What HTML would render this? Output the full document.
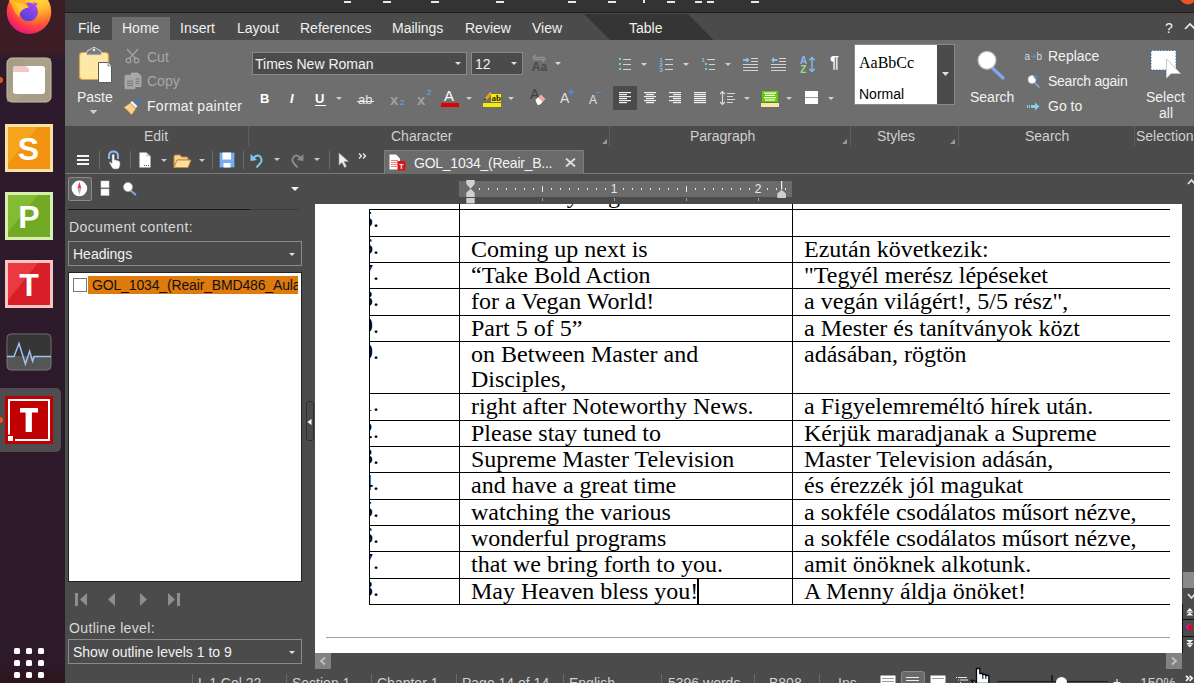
<!DOCTYPE html>
<html><head><meta charset="utf-8"><style>
html,body{margin:0;padding:0;width:1194px;height:683px;overflow:hidden;background:#4b4b4b}
.a{position:absolute}
.u{font-family:"Liberation Sans",sans-serif;font-size:14px;line-height:16px;white-space:nowrap}
.d{font-family:"Liberation Serif",serif;font-size:24px;line-height:25px;margin-top:1px;white-space:nowrap;color:#000}
</style></head><body>
<div class="a" style="left:0;top:0;width:65px;height:683px;background:linear-gradient(#3d1d25 0px,#3c1d25 52px,#2d1a2c 60px,#2c1a2b 665px,#2d1820 674px,#2b161b 683px)"></div>
<div class="a" style="left:65px;top:0px;width:1129px;height:683px;background:#4b4b4b"></div>
<div class="a" style="left:65px;top:0px;width:1129px;height:12px;background:#333333"></div>
<div class="a" style="left:65px;top:12px;width:1129px;height:1px;background:#2a1717"></div>
<div class="a" style="left:344px;top:1px;width:7px;height:2px;background:#e8e8e8"></div>
<div class="a" style="left:383px;top:1px;width:8px;height:2px;background:#e8e8e8"></div>
<div class="a" style="left:431px;top:1px;width:8px;height:2px;background:#e8e8e8"></div>
<div class="a" style="left:496px;top:1px;width:8px;height:2px;background:#e8e8e8"></div>
<div class="a" style="left:568px;top:1px;width:8px;height:2px;background:#e8e8e8"></div>
<div class="a" style="left:608px;top:1px;width:8px;height:2px;background:#e8e8e8"></div>
<div class="a" style="left:667px;top:1px;width:8px;height:2px;background:#e8e8e8"></div>
<div class="a" style="left:695px;top:1px;width:7px;height:2px;background:#e8e8e8"></div>
<div class="a" style="left:707px;top:1px;width:7px;height:2px;background:#e8e8e8"></div>
<div class="a" style="left:751px;top:1px;width:8px;height:2px;background:#e8e8e8"></div>
<div class="a" style="left:643px;top:0px;width:2px;height:3px;background:#e8e8e8"></div>
<svg class="a" style="left:1178px;top:0px;" width="16" height="5" viewBox="0 0 16 5"><circle cx="10" cy="-4" r="8.5" fill="#e95420"/></svg>
<div class="a" style="left:65px;top:13px;width:1129px;height:27px;background:#4b4b4b"></div>
<div class="a" style="left:112px;top:17px;width:58px;height:23px;background:#6e6e6e"></div>
<svg class="a" style="left:584px;top:13px" width="132" height="27"><polygon points="0,1 104,1 129.5,27 26,27" fill="#353535"/></svg>
<div class="a u" style="left:78px;top:20px;color:#f0f0f0">File</div>
<div class="a u" style="left:122px;top:20px;color:#f0f0f0">Home</div>
<div class="a u" style="left:180px;top:20px;color:#f0f0f0">Insert</div>
<div class="a u" style="left:237px;top:20px;color:#f0f0f0">Layout</div>
<div class="a u" style="left:300px;top:20px;color:#f0f0f0">References</div>
<div class="a u" style="left:392px;top:20px;color:#f0f0f0">Mailings</div>
<div class="a u" style="left:465px;top:20px;color:#f0f0f0">Review</div>
<div class="a u" style="left:532px;top:20px;color:#f0f0f0">View</div>
<div class="a u" style="left:629px;top:20px;color:#f0f0f0">Table</div>
<div class="a u" style="left:1165px;top:20px;color:#f0f0f0">?</div>
<svg class="a" style="left:1184px;top:22px;" width="10" height="8" viewBox="0 0 10 8"><polyline points="1,7 6,2 11,7" fill="none" stroke="#eee" stroke-width="1.6"/></svg>
<div class="a" style="left:65px;top:40px;width:1129px;height:86px;background:#6e6e6e"></div>
<div class="a" style="left:65px;top:126px;width:1129px;height:21px;background:#4b4b4b"></div>
<div class="a" style="left:248px;top:126px;width:1px;height:20px;background:#5e5e5e"></div>
<div class="a" style="left:609px;top:126px;width:1px;height:20px;background:#5e5e5e"></div>
<div class="a" style="left:850px;top:126px;width:1px;height:20px;background:#5e5e5e"></div>
<div class="a" style="left:958px;top:126px;width:1px;height:20px;background:#5e5e5e"></div>
<div class="a" style="left:1134px;top:126px;width:1px;height:20px;background:#5e5e5e"></div>
<div class="a u" style="left:144px;top:128px;color:#cfcfcf">Edit</div>
<div class="a u" style="left:391px;top:128px;color:#cfcfcf">Character</div>
<div class="a u" style="left:690px;top:128px;color:#cfcfcf">Paragraph</div>
<div class="a u" style="left:877px;top:128px;color:#cfcfcf">Styles</div>
<div class="a u" style="left:1025px;top:128px;color:#cfcfcf">Search</div>
<div class="a u" style="left:1136px;top:128px;color:#cfcfcf">Selection</div>
<svg class="a" style="left:602px;top:139px;" width="6" height="6" viewBox="0 0 6 6"><polygon points="5,0 5,5 0,5" fill="#9a9a9a"/></svg>
<svg class="a" style="left:842px;top:139px;" width="6" height="6" viewBox="0 0 6 6"><polygon points="5,0 5,5 0,5" fill="#9a9a9a"/></svg>
<svg class="a" style="left:950px;top:139px;" width="6" height="6" viewBox="0 0 6 6"><polygon points="5,0 5,5 0,5" fill="#9a9a9a"/></svg>
<div class="a u" style="left:77px;top:89px;color:#f2f2f2">Paste</div>
<svg class="a" style="left:90px;top:110px;" width="7" height="4" viewBox="0 0 7 4"><polygon points="0,0 7,0 3.5,4" fill="#cfcfcf"/></svg>
<div class="a u" style="left:147px;top:49px;color:#a8a8a8">Cut</div>
<div class="a u" style="left:147px;top:73px;color:#a8a8a8">Copy</div>
<div class="a u" style="left:147px;top:98px;color:#f2f2f2;letter-spacing:0.3px">Format painter</div>
<div class="a" style="left:252px;top:52px;width:215px;height:23px;background:#4b4b4b;box-sizing:border-box;border:1px solid #8a8a8a"></div>
<div class="a u" style="left:255px;top:56px;color:#f2f2f2">Times New Roman</div>
<svg class="a" style="left:455px;top:62px;" width="6" height="3" viewBox="0 0 6 3"><polygon points="0,0 6,0 3,3" fill="#e0e0e0"/></svg>
<div class="a" style="left:471px;top:52px;width:52px;height:23px;background:#4b4b4b;box-sizing:border-box;border:1px solid #8a8a8a"></div>
<div class="a u" style="left:475px;top:56px;color:#f2f2f2">12</div>
<svg class="a" style="left:511px;top:62px;" width="6" height="3" viewBox="0 0 6 3"><polygon points="0,0 6,0 3,3" fill="#e0e0e0"/></svg>
<div class="a" style="left:854px;top:44px;width:101px;height:61px;background:#4b4b4b;box-sizing:border-box;border:1px solid #8a8a8a"></div>
<div class="a" style="left:855px;top:45px;width:82px;height:59px;background:#ffffff"></div>
<div class="a " style="left:859px;top:54px;color:#000;font-family:'Liberation Serif',serif;font-size:16px">AaBbCc</div>
<div class="a u" style="left:859px;top:86px;color:#000">Normal</div>
<svg class="a" style="left:942px;top:72px;" width="7" height="4" viewBox="0 0 7 4"><polygon points="0,0 7,0 3.5,4" fill="#e0e0e0"/></svg>
<div class="a u" style="left:970px;top:89px;color:#f2f2f2">Search</div>
<div class="a u" style="left:1048px;top:48px;color:#f2f2f2">Replace</div>
<div class="a u" style="left:1048px;top:73px;color:#f2f2f2;letter-spacing:-0.25px">Search again</div>
<div class="a u" style="left:1048px;top:98px;color:#f2f2f2">Go to</div>
<div class="a u" style="left:1146px;top:89px;color:#f2f2f2">Select</div>
<div class="a u" style="left:1159px;top:105px;color:#f2f2f2">all</div>
<div class="a" style="left:65px;top:147px;width:1129px;height:26px;background:#4b4b4b"></div>
<div class="a" style="left:65px;top:173px;width:1129px;height:1px;background:#7a7a7a"></div>
<div class="a" style="left:384px;top:150px;width:200px;height:24px;background:#6b6b6b;box-sizing:border-box;border:1px solid #7d7d7d;border-bottom:none"></div>
<div class="a u" style="left:414px;top:155px;color:#f2f2f2;letter-spacing:-0.25px">GOL_1034_(Reair_B...</div>
<div class="a" style="left:65px;top:174px;width:240px;height:509px;background:#4b4b4b"></div>
<div class="a" style="left:68px;top:177px;width:24px;height:24px;background:#5e5e5e;box-sizing:border-box;border:1px solid #8a8a8a;border-radius:2px"></div>
<div class="a" style="left:68px;top:209px;width:182px;height:1px;background:#1a1a1a"></div>
<div class="a" style="left:250px;top:209px;width:49px;height:1px;background:#3a3d30"></div>
<div class="a u" style="left:69px;top:219px;color:#d8d8d8;letter-spacing:0.38px">Document content:</div>
<div class="a" style="left:68px;top:241px;width:234px;height:25px;background:#4b4b4b;box-sizing:border-box;border:1px solid #8a8a8a"></div>
<div class="a u" style="left:73px;top:246px;color:#f2f2f2">Headings</div>
<svg class="a" style="left:289px;top:253px;" width="6" height="3" viewBox="0 0 6 3"><polygon points="0,0 6,0 3,3" fill="#e0e0e0"/></svg>
<div class="a" style="left:68px;top:272px;width:234px;height:310px;background:#fff;box-sizing:border-box;border:1px solid #222"></div>
<div class="a" style="left:73px;top:278px;width:14px;height:14px;background:#fff;box-sizing:border-box;border:1px solid #777"></div>
<div class="a" style="left:88px;top:276px;width:210px;height:18px;background:#df7a0d"></div>
<div class="a u" style="left:92px;top:277px;width:206px;overflow:hidden;white-space:nowrap;color:#111;letter-spacing:-0.15px">GOL_1034_(Reair_BMD486_Aula</div>
<div class="a u" style="left:69px;top:620px;color:#d8d8d8;letter-spacing:0.36px">Outline level:</div>
<div class="a" style="left:68px;top:639px;width:234px;height:25px;background:#4b4b4b;box-sizing:border-box;border:1px solid #8a8a8a"></div>
<div class="a u" style="left:73px;top:644px;color:#f2f2f2">Show outline levels 1 to 9</div>
<svg class="a" style="left:289px;top:651px;" width="6" height="3" viewBox="0 0 6 3"><polygon points="0,0 6,0 3,3" fill="#e0e0e0"/></svg>
<div class="a" style="left:305px;top:174px;width:877px;height:479px;background:#4b4b4b"></div>
<div class="a" style="left:459px;top:181px;width:333px;height:16px;background:#6b6b6b"></div>
<div class="a" style="left:315px;top:204px;width:867px;height:449px;background:#ffffff"></div>
<div class="a" style="left:1182px;top:174px;width:12px;height:479px;background:#4b4b4b"></div>
<div class="a" style="left:305px;top:653px;width:889px;height:16px;background:#4b4b4b"></div>
<div class="a" style="left:315px;top:653px;width:16px;height:16px;background:#828282"></div>
<div class="a" style="left:1166px;top:653px;width:16px;height:16px;background:#828282"></div>
<div class="a" style="left:369px;top:209px;width:801px;height:1px;background:#000"></div>
<div class="a" style="left:369px;top:236px;width:801px;height:1px;background:#000"></div>
<div class="a" style="left:369px;top:262px;width:801px;height:1px;background:#000"></div>
<div class="a" style="left:369px;top:288px;width:801px;height:1px;background:#000"></div>
<div class="a" style="left:369px;top:315px;width:801px;height:1px;background:#000"></div>
<div class="a" style="left:369px;top:341px;width:801px;height:1px;background:#000"></div>
<div class="a" style="left:369px;top:393px;width:801px;height:1px;background:#000"></div>
<div class="a" style="left:369px;top:420px;width:801px;height:1px;background:#000"></div>
<div class="a" style="left:369px;top:446px;width:801px;height:1px;background:#000"></div>
<div class="a" style="left:369px;top:472px;width:801px;height:1px;background:#000"></div>
<div class="a" style="left:369px;top:499px;width:801px;height:1px;background:#000"></div>
<div class="a" style="left:369px;top:525px;width:801px;height:1px;background:#000"></div>
<div class="a" style="left:369px;top:551px;width:801px;height:1px;background:#000"></div>
<div class="a" style="left:369px;top:578px;width:801px;height:1px;background:#000"></div>
<div class="a" style="left:369px;top:604px;width:801px;height:1px;background:#000"></div>
<div class="a" style="left:369px;top:209px;width:1px;height:396px;background:#000"></div>
<div class="a" style="left:459px;top:204px;width:1px;height:401px;background:#000"></div>
<div class="a" style="left:792px;top:204px;width:1px;height:401px;background:#000"></div>
<div class="a d" style="left:471px;top:209px;"></div>
<div class="a d" style="left:804px;top:209px;"></div>
<div class="a d" style="left:370px;top:209px;width:89px;height:26px;overflow:hidden"><span style="position:absolute;left:-21px;top:-3px">15.</span></div>
<div class="a d" style="left:471px;top:236px;">Coming up next is</div>
<div class="a d" style="left:804px;top:236px;">Ezután következik:</div>
<div class="a d" style="left:370px;top:236px;width:89px;height:26px;overflow:hidden"><span style="position:absolute;left:-21px;top:-3px">16.</span></div>
<div class="a d" style="left:471px;top:262px;">“Take Bold Action</div>
<div class="a d" style="left:804px;top:262px;">"Tegyél merész lépéseket</div>
<div class="a d" style="left:370px;top:262px;width:89px;height:26px;overflow:hidden"><span style="position:absolute;left:-21px;top:-3px">17.</span></div>
<div class="a d" style="left:471px;top:288px;">for a Vegan World!</div>
<div class="a d" style="left:804px;top:288px;">a vegán világért!, 5/5 rész",</div>
<div class="a d" style="left:370px;top:288px;width:89px;height:26px;overflow:hidden"><span style="position:absolute;left:-21px;top:-3px">18.</span></div>
<div class="a d" style="left:471px;top:315px;">Part 5 of 5”</div>
<div class="a d" style="left:804px;top:315px;">a Mester és tanítványok közt</div>
<div class="a d" style="left:370px;top:315px;width:89px;height:26px;overflow:hidden"><span style="position:absolute;left:-21px;top:-3px">19.</span></div>
<div class="a d" style="left:471px;top:341px;">on Between Master and<br>Disciples,</div>
<div class="a d" style="left:804px;top:341px;">adásában, rögtön</div>
<div class="a d" style="left:370px;top:341px;width:89px;height:26px;overflow:hidden"><span style="position:absolute;left:-21px;top:-3px">20.</span></div>
<div class="a d" style="left:471px;top:393px;">right after Noteworthy News.</div>
<div class="a d" style="left:804px;top:393px;">a Figyelemreméltó hírek után.</div>
<div class="a d" style="left:370px;top:393px;width:89px;height:26px;overflow:hidden"><span style="position:absolute;left:-21px;top:-3px">21.</span></div>
<div class="a d" style="left:471px;top:420px;">Please stay tuned to</div>
<div class="a d" style="left:804px;top:420px;">Kérjük maradjanak a Supreme</div>
<div class="a d" style="left:370px;top:420px;width:89px;height:26px;overflow:hidden"><span style="position:absolute;left:-21px;top:-3px">22.</span></div>
<div class="a d" style="left:471px;top:446px;">Supreme Master Television</div>
<div class="a d" style="left:804px;top:446px;">Master Television adásán,</div>
<div class="a d" style="left:370px;top:446px;width:89px;height:26px;overflow:hidden"><span style="position:absolute;left:-21px;top:-3px">23.</span></div>
<div class="a d" style="left:471px;top:472px;">and have a great time</div>
<div class="a d" style="left:804px;top:472px;">és érezzék jól magukat</div>
<div class="a d" style="left:370px;top:472px;width:89px;height:26px;overflow:hidden"><span style="position:absolute;left:-21px;top:-3px">24.</span></div>
<div class="a d" style="left:471px;top:499px;">watching the various</div>
<div class="a d" style="left:804px;top:499px;">a sokféle csodálatos műsort nézve,</div>
<div class="a d" style="left:370px;top:499px;width:89px;height:26px;overflow:hidden"><span style="position:absolute;left:-21px;top:-3px">25.</span></div>
<div class="a d" style="left:471px;top:525px;">wonderful programs</div>
<div class="a d" style="left:804px;top:525px;">a sokféle csodálatos műsort nézve,</div>
<div class="a d" style="left:370px;top:525px;width:89px;height:26px;overflow:hidden"><span style="position:absolute;left:-21px;top:-3px">26.</span></div>
<div class="a d" style="left:471px;top:551px;">that we bring forth to you.</div>
<div class="a d" style="left:804px;top:551px;">amit önöknek alkotunk.</div>
<div class="a d" style="left:370px;top:551px;width:89px;height:26px;overflow:hidden"><span style="position:absolute;left:-21px;top:-3px">27.</span></div>
<div class="a d" style="left:471px;top:578px;">May Heaven bless you!</div>
<div class="a d" style="left:804px;top:578px;">A Menny áldja önöket!</div>
<div class="a d" style="left:370px;top:578px;width:89px;height:26px;overflow:hidden"><span style="position:absolute;left:-21px;top:-3px">28.</span></div>
<div class="a" style="left:460px;top:204px;width:332px;height:5px;overflow:hidden"><div class="a d" style="left:8px;top:-22px">And wish you</div><div class="a d" style="left:148px;top:-22px">good</div></div>
<div class="a" style="left:697px;top:579px;width:2px;height:25px;background:#000"></div>
<div class="a" style="left:326px;top:637px;width:844px;height:1px;background:#a0a0a0"></div>
<div class="a" style="left:192px;top:674px;width:1px;height:9px;background:#6a6a6a"></div>
<div class="a" style="left:286px;top:674px;width:1px;height:9px;background:#6a6a6a"></div>
<div class="a" style="left:371px;top:674px;width:1px;height:9px;background:#6a6a6a"></div>
<div class="a" style="left:456px;top:674px;width:1px;height:9px;background:#6a6a6a"></div>
<div class="a" style="left:563px;top:674px;width:1px;height:9px;background:#6a6a6a"></div>
<div class="a" style="left:661px;top:674px;width:1px;height:9px;background:#6a6a6a"></div>
<div class="a" style="left:754px;top:674px;width:1px;height:9px;background:#6a6a6a"></div>
<div class="a" style="left:819px;top:674px;width:1px;height:9px;background:#6a6a6a"></div>
<div class="a u" style="left:198px;top:675px;color:#d0d0d0">L 1 Col 22</div>
<div class="a u" style="left:292px;top:675px;color:#d0d0d0">Section 1</div>
<div class="a u" style="left:377px;top:675px;color:#d0d0d0">Chapter 1</div>
<div class="a u" style="left:462px;top:675px;color:#d0d0d0">Page 14 of 14</div>
<div class="a u" style="left:569px;top:675px;color:#d0d0d0">English</div>
<div class="a u" style="left:668px;top:675px;color:#d0d0d0">5396 words</div>
<div class="a u" style="left:769px;top:675px;color:#d0d0d0">B808</div>
<div class="a u" style="left:838px;top:675px;color:#d0d0d0">Ins</div>
<div class="a u" style="left:1140px;top:675px;color:#d0d0d0">150%</div>
<svg class="a" style="left:0px;top:0px;" width="64" height="40" viewBox="0 0 64 40"><defs><radialGradient id="ffg" cx="0.72" cy="0.1" r="0.95"><stop offset="0" stop-color="#ffe54a"/><stop offset="0.35" stop-color="#ffc030"/><stop offset="0.6" stop-color="#ff7a30"/><stop offset="0.82" stop-color="#ff3a48"/><stop offset="1" stop-color="#e8187a"/></radialGradient><linearGradient id="ffp" x1="0.8" y1="0" x2="0.2" y2="1"><stop offset="0" stop-color="#b048f0"/><stop offset="1" stop-color="#4a40d8"/></linearGradient></defs><circle cx="29" cy="11.7" r="22.3" fill="url(#ffg)"/><circle cx="28.7" cy="11.8" r="9.3" fill="url(#ffp)"/><path d="M33,2 L38,4 L35,6 Z" fill="#a048f0"/><path d="M9,0 L24,0 L29,7.5 Q24,7 20,13 L19,17 Q14,12 12,6 Z" fill="#ffb020"/><path d="M14,2 L22,3 L28,7.5 Q23,8 20,12 Z" fill="#ffc838"/></svg>
<svg class="a" style="left:6px;top:57px;" width="46" height="46" viewBox="0 0 46 46"><rect x="1" y="1" width="44" height="44" rx="5" fill="#a59d88" stroke="#c8c0a8" stroke-width="1"/><path d="M20,1 L45,1 L45,10 L10,45 L1,45 L1,40 Z" fill="#b0a890" opacity="0.5"/><rect x="7" y="9" width="32" height="28" rx="3" fill="#ffffff"/><path d="M7,15 L7,11 Q7,9 9,9 L20,9 L23,12 L23,15 Z" fill="#f0c8c4"/></svg>
<div class="a" style="left:0px;top:77px;width:3px;height:6px;background:#e95420;border-radius:0 3px 3px 0"></div>
<svg class="a" style="left:5px;top:124px;" width="48" height="48" viewBox="0 0 48 48"><rect x="0" y="0" width="48" height="48" fill="#f9e2a8"/><rect x="3" y="3" width="42" height="42" fill="#f29410"/><path d="M3,3 L33,3 L3,40 Z" fill="#f8a820" opacity="0.8"/><text x="23.5" y="35.5" font-family="Liberation Sans" font-weight="bold" font-size="32" fill="#fff" text-anchor="middle">S</text></svg>
<svg class="a" style="left:5px;top:192px;" width="48" height="48" viewBox="0 0 48 48"><rect x="0" y="0" width="48" height="48" fill="#d8edb0"/><rect x="3" y="3" width="42" height="42" fill="#72a924"/><path d="M3,3 L33,3 L3,40 Z" fill="#88c034" opacity="0.8"/><text x="24" y="35.5" font-family="Liberation Sans" font-weight="bold" font-size="32" fill="#fff" text-anchor="middle">P</text></svg>
<svg class="a" style="left:5px;top:260px;" width="48" height="48" viewBox="0 0 48 48"><rect x="0" y="0" width="48" height="48" fill="#f8c4c4"/><rect x="3" y="3" width="42" height="42" fill="#d81e26"/><path d="M3,3 L33,3 L3,40 Z" fill="#ee4048" opacity="0.8"/><text x="24" y="35.5" font-family="Liberation Sans" font-weight="bold" font-size="32" fill="#fff" text-anchor="middle">T</text></svg>
<svg class="a" style="left:6px;top:333px;" width="46" height="38" viewBox="0 0 46 38"><rect x="1" y="1" width="44" height="36" rx="4" fill="#555555" stroke="#787878" stroke-width="1"/><path d="M1.5,23 L1.5,5 Q1.5,1.5 5,1.5 L41,1.5 Q44.5,1.5 44.5,5 L44.5,23 Z" fill="#363636"/><polyline points="1,23.4 8,23.4 13,10.5 19.4,31 23.6,18.2 26.6,28.2 28.2,23.4 45,23.4" fill="none" stroke="#9cc0f0" stroke-width="1.5"/></svg>
<div class="a" style="left:0px;top:388px;width:61px;height:64px;background:#4e4c4e;border-radius:0 5px 5px 0"></div>
<svg class="a" style="left:5px;top:396px;" width="48" height="48" viewBox="0 0 48 48"><rect x="0" y="0" width="48" height="48" fill="#c00000"/><path d="M4,38.5 L4,4 L44,4 L44,44 L10,44" fill="none" stroke="#fff" stroke-width="2"/><rect x="3" y="40" width="5" height="5" fill="#fff"/><rect x="15" y="12" width="18" height="4.5" fill="#fff"/><rect x="20.6" y="12" width="6.3" height="24" fill="#fff"/></svg>
<div class="a" style="left:0px;top:417px;width:3px;height:6px;background:#e95420;border-radius:0 3px 3px 0"></div>
<div class="a" style="left:14px;top:648px;width:6px;height:6px;background:#fff;border-radius:1.5px"></div>
<div class="a" style="left:14px;top:660px;width:6px;height:6px;background:#fff;border-radius:1.5px"></div>
<div class="a" style="left:14px;top:672px;width:6px;height:6px;background:#fff;border-radius:1.5px"></div>
<div class="a" style="left:26px;top:648px;width:6px;height:6px;background:#fff;border-radius:1.5px"></div>
<div class="a" style="left:26px;top:660px;width:6px;height:6px;background:#fff;border-radius:1.5px"></div>
<div class="a" style="left:26px;top:672px;width:6px;height:6px;background:#fff;border-radius:1.5px"></div>
<div class="a" style="left:38px;top:648px;width:6px;height:6px;background:#fff;border-radius:1.5px"></div>
<div class="a" style="left:38px;top:660px;width:6px;height:6px;background:#fff;border-radius:1.5px"></div>
<div class="a" style="left:38px;top:672px;width:6px;height:6px;background:#fff;border-radius:1.5px"></div>
<svg class="a" style="left:77px;top:45px;" width="38" height="40" viewBox="0 0 38 40"><rect x="2.5" y="7.5" width="29" height="27" rx="3" fill="#fde8a6" stroke="#dba050" stroke-width="1.2"/><path d="M9.5,10 L9.5,8 Q9.5,5 13,4.5 L14.5,3.5 Q17,1 19.5,3.5 L21,4.5 Q24.5,5 24.5,8 L24.5,10 Z" fill="#7a7a7a" stroke="#d8d8d8" stroke-width="1"/><circle cx="17" cy="5" r="1.2" fill="#eee"/><path d="M21.5,17.5 L31,17.5 L34.5,21 L34.5,37.5 L21.5,37.5 Z" fill="#fff" stroke="#5a5a5a" stroke-width="1"/><path d="M31,17.5 L31,21 L34.5,21" fill="#ddd" stroke="#888" stroke-width="0.8"/></svg>
<svg class="a" style="left:90px;top:110px;" width="7" height="4" viewBox="0 0 7 4"><polygon points="0,0 7,0 3.5,4" fill="#cfcfcf"/></svg>
<svg class="a" style="left:125px;top:48px;" width="16" height="16" viewBox="0 0 16 16"><g fill="none" stroke="#a2a2a2" stroke-width="1.3"><line x1="2" y1="1" x2="11" y2="11"/><line x1="13" y1="1" x2="4" y2="11"/><circle cx="3.5" cy="12.5" r="2.3"/><circle cx="11.5" cy="12.5" r="2.3"/></g></svg>
<svg class="a" style="left:124px;top:72px;" width="18" height="18" viewBox="0 0 18 18"><g fill="#a6a6a6" stroke="#b8b8b8" stroke-width="0.6"><path d="M7.3,1 H14 L17,4 V14.7 H7.3 Z"/><path d="M1,3.3 H8 L11,6.3 V16.8 H1 Z"/></g><g fill="#777"><rect x="3" y="8.7" width="6" height="1"/><rect x="3" y="10.9" width="6" height="1"/><rect x="3" y="13.1" width="6" height="1"/><rect x="11.5" y="6.5" width="4" height="1"/><rect x="11.5" y="8.9" width="4" height="1"/><rect x="11.5" y="11.1" width="4" height="1"/></g></svg>
<svg class="a" style="left:123px;top:97px;" width="18" height="18" viewBox="0 0 18 18"><line x1="17.5" y1="1.4" x2="12.5" y2="6.4" stroke="#3d7cc0" stroke-width="2.6"/><line x1="8.2" y1="4.8" x2="13.6" y2="10.2" stroke="#f4f4f4" stroke-width="2.6"/><path d="M7.3,6.3 L12.6,11.6 L8.7,17.6 L1.2,10.2 Z" fill="#f8d890" stroke="#e0a040" stroke-width="0.8"/><g stroke="#e8b060" stroke-width="0.6"><line x1="9" y1="8" x2="4" y2="13"/><line x1="11" y1="10" x2="6" y2="15"/></g></svg>
<svg class="a" style="left:525px;top:53px;" width="24" height="19" viewBox="0 0 24 19"><g stroke="#8e8e8e" stroke-width="1.3" fill="none"><polyline points="11,1.8 8,4.5 20,4.5"/><polyline points="8,6.5 20,6.5 17,9.2"/></g><text x="6.8" y="17.8" font-family="Liberation Sans" font-size="12" font-weight="bold" fill="#4a4a4a">Aa</text></svg>
<svg class="a" style="left:555px;top:62px;" width="6" height="3" viewBox="0 0 6 3"><polygon points="0,0 6,0 3,3" fill="#d8d8d8"/></svg>
<div class="a u" style="left:260px;top:91px;color:#fff;font-weight:bold;font-size:13px">B</div>
<div class="a u" style="left:290px;top:91px;color:#fff;font-style:italic;font-weight:bold;font-size:13px">I</div>
<div class="a u" style="left:315px;top:91px;color:#fff;font-weight:bold;font-size:13px">U</div>
<div class="a" style="left:315px;top:105px;width:11px;height:1px;background:#fff"></div>
<svg class="a" style="left:336px;top:97px;" width="6" height="3" viewBox="0 0 6 3"><polygon points="0,0 6,0 3,3" fill="#d0d0d0"/></svg>
<div class="a u" style="left:358px;top:92px;color:#e8e8e8;font-size:13px">ab</div>
<div class="a" style="left:357px;top:101px;width:17px;height:1px;background:#e8e8e8"></div>
<div class="a u" style="left:390px;top:92px;color:#a0a0a0;font-size:15px;font-weight:bold">x</div>
<div class="a u" style="left:400px;top:99px;color:#6ab0ee;font-size:8px;line-height:8px">2</div>
<div class="a u" style="left:417px;top:92px;color:#a0a0a0;font-size:15px;font-weight:bold">x</div>
<div class="a u" style="left:427px;top:89px;color:#6ab0ee;font-size:8px;line-height:8px">2</div>
<div class="a u" style="left:444px;top:88px;color:#fff;font-size:15px">A</div>
<div class="a" style="left:441px;top:103px;width:18px;height:4px;background:#e00000"></div>
<svg class="a" style="left:466px;top:97px;" width="6" height="3" viewBox="0 0 6 3"><polygon points="0,0 6,0 3,3" fill="#d0d0d0"/></svg>
<svg class="a" style="left:482px;top:89px;" width="20" height="19" viewBox="0 0 20 19"><rect x="1" y="14" width="18" height="4" fill="#f8ec00"/><rect x="9" y="5" width="10" height="8" fill="#f8ec00"/><text x="9.5" y="12" font-family="Liberation Serif" font-weight="bold" font-size="9" fill="#222">ab</text><path d="M1,12 L3,9 L8,3 L10,4.5 L5,11 Z" fill="#f0a020"/><path d="M1,12 L3,9 L4.5,10.5 Z" fill="#333"/></svg>
<svg class="a" style="left:508px;top:97px;" width="6" height="3" viewBox="0 0 6 3"><polygon points="0,0 6,0 3,3" fill="#d0d0d0"/></svg>
<div class="a u" style="left:530px;top:86px;color:#404040;font-size:14px">A</div>
<svg class="a" style="left:534px;top:94px;" width="12" height="12" viewBox="0 0 12 12"><path d="M7,0.5 L11.5,5 L6,10.5 L1.5,6 Z" fill="#f0a8a8"/><path d="M4,3.5 L8.5,8 L6,10.5 Q4,11.5 3,10 L1.5,6 Z" fill="#fff"/></svg>
<div class="a u" style="left:560px;top:90px;color:#e0e0e0;font-size:14px">A</div>
<svg class="a" style="left:568px;top:89px;" width="6" height="6" viewBox="0 0 6 6"><path d="M3,0 V6 M0,3 H6" stroke="#4a90e0" stroke-width="1.4"/></svg>
<div class="a u" style="left:589px;top:92px;color:#e0e0e0;font-size:12px">A</div>
<div class="a" style="left:596px;top:92px;width:5px;height:1px;background:#4a90e0"></div>
<svg class="a" style="left:618px;top:57px;" width="14" height="14" viewBox="0 0 14 14"><g fill="#7cc6f0"><rect x="1" y="1" width="2" height="2"/><rect x="1" y="6" width="2" height="2"/><rect x="1" y="11" width="2" height="2"/></g><g fill="#d4d4d4"><rect x="5" y="2" width="8" height="1"/><rect x="5" y="7" width="8" height="1"/><rect x="5" y="12" width="8" height="1"/></g></svg>
<svg class="a" style="left:641px;top:63px;" width="6" height="3" viewBox="0 0 6 3"><polygon points="0,0 6,0 3,3" fill="#d0d0d0"/></svg>
<svg class="a" style="left:659px;top:56px;" width="15" height="16" viewBox="0 0 15 16"><g fill="#7cc6f0" font-family="Liberation Sans" font-size="6" font-weight="bold"><text x="0.5" y="6">1</text><text x="0.5" y="11">2</text><text x="0.5" y="16">3</text></g><g fill="#d4d4d4"><rect x="6" y="3" width="8" height="1"/><rect x="6" y="8" width="8" height="1"/><rect x="6" y="13" width="8" height="1"/></g></svg>
<svg class="a" style="left:683px;top:63px;" width="6" height="3" viewBox="0 0 6 3"><polygon points="0,0 6,0 3,3" fill="#d0d0d0"/></svg>
<svg class="a" style="left:701px;top:56px;" width="15" height="16" viewBox="0 0 15 16"><g fill="#7cc6f0"><text x="0.5" y="6" font-family="Liberation Sans" font-size="6" font-weight="bold">1</text><rect x="4" y="7" width="2" height="2"/><rect x="4" y="12" width="2" height="2"/></g><g fill="#d4d4d4"><rect x="6" y="3" width="8" height="1"/><rect x="8" y="8" width="6" height="1"/><rect x="8" y="13" width="6" height="1"/></g></svg>
<svg class="a" style="left:725px;top:63px;" width="6" height="3" viewBox="0 0 6 3"><polygon points="0,0 6,0 3,3" fill="#d0d0d0"/></svg>
<svg class="a" style="left:742px;top:56px;" width="17" height="16" viewBox="0 0 17 16"><path d="M1,3 H4.5 V1 L7.5,4 L4.5,7 V5 H1 Z" fill="#7cc6f0"/><g fill="#d4d4d4"><rect x="9" y="2" width="7" height="1"/><rect x="9" y="5" width="7" height="1"/><rect x="1" y="8" width="15" height="1"/><rect x="1" y="11" width="15" height="1"/><rect x="1" y="14" width="15" height="1"/></g></svg>
<svg class="a" style="left:770px;top:56px;" width="17" height="16" viewBox="0 0 17 16"><path d="M7.5,3 H4 V1 L1,4 L4,7 V5 H7.5 Z" fill="#7cc6f0"/><g fill="#d4d4d4"><rect x="9" y="2" width="7" height="1"/><rect x="9" y="5" width="7" height="1"/><rect x="1" y="8" width="15" height="1"/><rect x="1" y="11" width="15" height="1"/><rect x="1" y="14" width="15" height="1"/></g></svg>
<svg class="a" style="left:800px;top:56px;" width="16" height="17" viewBox="0 0 16 17"><text x="0" y="8" font-family="Liberation Sans" font-size="10" font-weight="bold" fill="#88b8f0">A</text><text x="0.3" y="16.5" font-family="Liberation Sans" font-size="10" font-weight="bold" fill="#90e080">Z</text><g stroke="#7cc6f0" stroke-width="1.3" fill="none"><line x1="12" y1="1.5" x2="12" y2="15.5"/><polyline points="9.3,4.2 12,1.5 14.7,4.2"/><polyline points="9.3,12.8 12,15.5 14.7,12.8"/></g></svg>
<div class="a u" style="left:830px;top:55px;color:#fff;font-size:16px;font-weight:bold">¶</div>
<div class="a" style="left:613px;top:86px;width:24px;height:24px;background:#4b4b4b"></div>
<svg class="a" style="left:619px;top:92px;" width="14" height="12" viewBox="0 0 14 12"><g fill="#f0f0f0"><rect x="0" y="0" width="12" height="1.2"/><rect x="0" y="2" width="8" height="1.2"/><rect x="0" y="4" width="12" height="1.2"/><rect x="0" y="6" width="8" height="1.2"/><rect x="0" y="8" width="12" height="1.2"/><rect x="0" y="10" width="8" height="1.2"/></g></svg>
<svg class="a" style="left:644px;top:92px;" width="14" height="12" viewBox="0 0 14 12"><g fill="#f0f0f0"><rect x="0" y="0" width="12" height="1.2"/><rect x="2" y="2" width="8" height="1.2"/><rect x="0" y="4" width="12" height="1.2"/><rect x="2" y="6" width="8" height="1.2"/><rect x="0" y="8" width="12" height="1.2"/><rect x="2" y="10" width="8" height="1.2"/></g></svg>
<svg class="a" style="left:669px;top:92px;" width="14" height="12" viewBox="0 0 14 12"><g fill="#f0f0f0"><rect x="0" y="0" width="12" height="1.2"/><rect x="4" y="2" width="8" height="1.2"/><rect x="0" y="4" width="12" height="1.2"/><rect x="4" y="6" width="8" height="1.2"/><rect x="0" y="8" width="12" height="1.2"/><rect x="4" y="10" width="8" height="1.2"/></g></svg>
<svg class="a" style="left:694px;top:92px;" width="14" height="12" viewBox="0 0 14 12"><g fill="#f0f0f0"><rect x="0" y="0" width="12" height="1.2"/><rect x="0" y="2" width="12" height="1.2"/><rect x="0" y="4" width="12" height="1.2"/><rect x="0" y="6" width="12" height="1.2"/><rect x="0" y="8" width="12" height="1.2"/><rect x="0" y="10" width="12" height="1.2"/></g></svg>
<svg class="a" style="left:719px;top:90px;" width="17" height="16" viewBox="0 0 17 16"><g stroke="#d8d8d8" stroke-width="1.2" fill="none"><line x1="3.5" y1="1.5" x2="3.5" y2="14.5"/><polyline points="1,4 3.5,1.5 6,4"/><polyline points="1,12 3.5,14.5 6,12"/></g><g fill="#d8d8d8"><rect x="8" y="3" width="8" height="1"/><rect x="8" y="6" width="6" height="1"/><rect x="8" y="9" width="8" height="1"/><rect x="8" y="12" width="6" height="1"/></g></svg>
<svg class="a" style="left:744px;top:97px;" width="6" height="3" viewBox="0 0 6 3"><polygon points="0,0 6,0 3,3" fill="#d0d0d0"/></svg>
<svg class="a" style="left:761px;top:90px;" width="19" height="17" viewBox="0 0 19 17"><rect x="1" y="1" width="16" height="11" fill="#66cc00"/><g fill="#fff"><rect x="3" y="2.5" width="12" height="1.2"/><rect x="4" y="4.8" width="10" height="1.2"/><rect x="3" y="7.1" width="12" height="1.2"/><rect x="4" y="9.4" width="10" height="1.2"/></g><rect x="0" y="13" width="18" height="4" fill="#fde89c"/></svg>
<svg class="a" style="left:786px;top:97px;" width="6" height="3" viewBox="0 0 6 3"><polygon points="0,0 6,0 3,3" fill="#d0d0d0"/></svg>
<svg class="a" style="left:805px;top:90px;" width="14" height="14" viewBox="0 0 14 14"><rect x="0" y="1" width="13" height="13" fill="#fff"/><rect x="0" y="7" width="13" height="1" fill="#999"/></svg>
<svg class="a" style="left:828px;top:97px;" width="6" height="3" viewBox="0 0 6 3"><polygon points="0,0 6,0 3,3" fill="#d0d0d0"/></svg>
<svg class="a" style="left:976px;top:49px;" width="32" height="32" viewBox="0 0 32 32"><line x1="17" y1="19.5" x2="27" y2="29" stroke="#80a8ec" stroke-width="3.2" stroke-linecap="round"/><circle cx="11" cy="11.3" r="9" fill="#fff" stroke="#b8b8b8" stroke-width="1.2"/></svg>
<svg class="a" style="left:1024px;top:51px;" width="20" height="11" viewBox="0 0 20 11"><text x="0.5" y="9" font-family="Liberation Sans" font-size="10" fill="#dcdcdc">a</text><text x="12.5" y="9" font-family="Liberation Sans" font-size="10" fill="#dcdcdc">b</text><path d="M7,5.5 H11 M9.5,3.8 L11.5,5.5 L9.5,7.2" stroke="#5090d0" stroke-width="1.2" fill="none"/></svg>
<svg class="a" style="left:1026px;top:74px;" width="16" height="15" viewBox="0 0 16 15"><line x1="8" y1="8" x2="13.5" y2="13.5" stroke="#80a8ec" stroke-width="1.6"/><circle cx="6" cy="5.5" r="4" fill="#fff" stroke="#bbb" stroke-width="0.8"/><polygon points="7,2.5 11,2 10,6" fill="#5090e0"/></svg>
<svg class="a" style="left:1026px;top:102px;" width="15" height="9" viewBox="0 0 15 9"><g fill="#88ccf0"><rect x="1" y="3" width="1" height="3"/><rect x="3" y="3" width="1" height="3"/><path d="M5,3 H9 V0.5 L13.5,4.5 L9,8.5 V6 H5 Z"/></g></svg>
<svg class="a" style="left:1149px;top:49px;" width="34" height="32" viewBox="0 0 34 32"><rect x="2" y="1.5" width="25" height="19.5" fill="#fff" stroke="#2a70c0" stroke-width="1" stroke-dasharray="1.5,1.5"/><path d="M17.5,10 L17.5,29 L22,24.5 L31.5,24.5 Z" fill="#fff" stroke="#c8c8c8" stroke-width="1"/></svg>
<div class="a" style="left:77px;top:155px;width:12px;height:2px;background:#f4f4f4"></div>
<div class="a" style="left:77px;top:159px;width:12px;height:2px;background:#f4f4f4"></div>
<div class="a" style="left:77px;top:163px;width:12px;height:2px;background:#f4f4f4"></div>
<div class="a" style="left:99px;top:151px;width:1px;height:18px;background:#6a6a6a"></div>
<div class="a" style="left:130px;top:151px;width:1px;height:18px;background:#6a6a6a"></div>
<div class="a" style="left:212px;top:151px;width:1px;height:18px;background:#6a6a6a"></div>
<div class="a" style="left:243px;top:151px;width:1px;height:18px;background:#6a6a6a"></div>
<div class="a" style="left:329px;top:151px;width:1px;height:18px;background:#6a6a6a"></div>
<svg class="a" style="left:106px;top:150px;" width="16" height="20" viewBox="0 0 16 20"><path d="M3,9 V6 Q3,1.5 7.5,1.5 Q12,1.5 12,6 V9" fill="none" stroke="#8ab8f0" stroke-width="2"/><path d="M6,17.5 L3.5,13 Q3,11.5 4.5,12 L6,13.5 V5.5 Q6,4 7.2,4 Q8.4,4 8.4,5.5 V10 Q10,9.5 10.5,10.5 Q12,10 12.5,11 Q14,11 14,12.5 V15 Q14,17.5 12,19 H7.5 Z" fill="#fff" stroke="#888" stroke-width="0.6"/></svg>
<svg class="a" style="left:139px;top:152px;" width="12" height="16" viewBox="0 0 12 16"><path d="M0.5,0.5 H7.5 L11.5,4.5 V15.5 H0.5 Z" fill="#fff"/><path d="M7.5,0.5 V4.5 H11.5" fill="#ccc"/><g fill="#555"><rect x="5" y="13" width="1" height="1"/><rect x="7" y="13" width="1" height="1"/><rect x="9" y="13" width="1" height="1"/></g></svg>
<svg class="a" style="left:161px;top:159px;" width="6" height="3" viewBox="0 0 6 3"><polygon points="0,0 6,0 3,3" fill="#c8c8c8"/></svg>
<svg class="a" style="left:173px;top:154px;" width="19" height="15" viewBox="0 0 19 15"><path d="M1,13.5 V2.5 Q1,1 2.5,1 H7 L8.5,3 H13.5 Q15,3 15,4.5 V6 H4.5 Z" fill="#f8d090" stroke="#c88838" stroke-width="1"/><path d="M1,13.5 L4,6 H18 L15,13.5 Z" fill="#fde0a0" stroke="#c88838" stroke-width="1"/></svg>
<svg class="a" style="left:199px;top:159px;" width="6" height="3" viewBox="0 0 6 3"><polygon points="0,0 6,0 3,3" fill="#c8c8c8"/></svg>
<svg class="a" style="left:219px;top:152px;" width="16" height="16" viewBox="0 0 16 16"><rect x="0.5" y="0.5" width="15" height="15" fill="#78aef0" stroke="#5a6a80" stroke-width="0.8"/><rect x="3.5" y="0.5" width="8.5" height="7" fill="#fff"/><rect x="4.5" y="11" width="7" height="4.5" fill="#fff"/></svg>
<svg class="a" style="left:250px;top:152px;" width="14" height="16" viewBox="0 0 14 16"><path d="M3,7 Q6,2 9.5,4 Q13,7 10.5,11 L6.5,15.5" fill="none" stroke="#7cc8f0" stroke-width="2"/><polygon points="0.5,2 0.5,9 7,8" fill="#7cc8f0"/></svg>
<svg class="a" style="left:274px;top:158px;" width="6" height="3" viewBox="0 0 6 3"><polygon points="0,0 6,0 3,3" fill="#c8c8c8"/></svg>
<svg class="a" style="left:290px;top:152px;" width="14" height="16" viewBox="0 0 14 16"><path d="M11,7 Q8,2 4.5,4 Q1,7 3.5,11 L7.5,15.5" fill="none" stroke="#8a8a8a" stroke-width="2"/><polygon points="13.5,2 13.5,9 7,8" fill="#8a8a8a"/></svg>
<svg class="a" style="left:314px;top:158px;" width="6" height="3" viewBox="0 0 6 3"><polygon points="0,0 6,0 3,3" fill="#c8c8c8"/></svg>
<svg class="a" style="left:338px;top:152px;" width="12" height="16" viewBox="0 0 12 16"><path d="M1,1 V13 L4,10.5 L6.5,15.5 L8.5,14.5 L6,9.5 H10.5 Z" fill="#f0f0f0" stroke="#9a9a9a" stroke-width="0.6"/></svg>
<svg class="a" style="left:358px;top:153px;" width="9" height="6" viewBox="0 0 9 6"><path d="M1,0.5 L3.5,3 L1,5.5 M5,0.5 L7.5,3 L5,5.5" fill="none" stroke="#f0f0f0" stroke-width="1.3"/></svg>
<svg class="a" style="left:389px;top:154px;" width="17" height="17" viewBox="0 0 17 17"><path d="M0.5,0.5 H7 L11,4.5 V15.5 H0.5 Z" fill="#fff"/><g fill="#f08080"><rect x="2" y="6" width="7" height="1"/><rect x="2" y="8" width="7" height="1"/><rect x="2" y="10" width="7" height="1"/><rect x="2" y="12" width="6" height="1"/></g><rect x="8.5" y="7" width="8" height="9.5" fill="#d8141c"/><text x="12.5" y="15" font-family="Liberation Sans" font-size="7" font-weight="bold" fill="#fff" text-anchor="middle">T</text></svg>
<svg class="a" style="left:565px;top:158px;" width="11" height="9" viewBox="0 0 11 9"><path d="M1,0.5 L10,8.5 M10,0.5 L1,8.5" stroke="#e0e0e0" stroke-width="1.8"/></svg>
<svg class="a" style="left:71px;top:180px;" width="17" height="17" viewBox="0 0 17 17"><circle cx="8.4" cy="8.4" r="7.8" fill="#fff"/><polygon points="8.4,1.7 6.4,8.4 10.4,8.4" fill="#f03840"/><polygon points="8.4,14.8 6.4,8.4 10.4,8.4" fill="#b0b0b0"/></svg>
<svg class="a" style="left:100px;top:180px;" width="10" height="17" viewBox="0 0 10 17"><rect x="1" y="1" width="8" height="6.5" fill="#fff" stroke="#ccc" stroke-width="0.6"/><rect x="1" y="9" width="8" height="6.5" fill="#fff" stroke="#ccc" stroke-width="0.6"/></svg>
<svg class="a" style="left:122px;top:182px;" width="16" height="15" viewBox="0 0 16 15"><line x1="8" y1="8" x2="14" y2="13" stroke="#80a8ec" stroke-width="1.8"/><circle cx="6" cy="5" r="4.5" fill="#fff" stroke="#bbb" stroke-width="0.6"/></svg>
<svg class="a" style="left:291px;top:187px;" width="8" height="4" viewBox="0 0 8 4"><polygon points="0,0 8,0 4,4" fill="#f0f0f0"/></svg>
<svg class="a" style="left:74px;top:592px;" width="108" height="15" viewBox="0 0 108 15"><g fill="#8e8e8e"><rect x="1" y="1" width="3" height="13"/><polygon points="13,1 13,14 6,7.5"/><polygon points="41,1 41,14 34,7.5"/><polygon points="66,1 66,14 73,7.5"/><polygon points="94,1 94,14 101,7.5"/><rect x="103" y="1" width="3" height="13"/></g></svg>
<div class="a" style="left:306px;top:401px;width:8px;height:40px;background:#4b4b4b;box-sizing:border-box;border:1px solid #2e2e2e;border-radius:3px"></div>
<svg class="a" style="left:307px;top:419px;" width="5" height="6" viewBox="0 0 5 6"><polygon points="4.5,0 4.5,6 0.5,3" fill="#fff"/></svg>
<svg class="a" style="left:880px;top:675px;" width="16" height="8" viewBox="0 0 16 8"><rect x="0.5" y="0.5" width="15" height="10" fill="#fff"/><g fill="#999"><rect x="2" y="3" width="12" height="1"/><rect x="2" y="6" width="12" height="1"/></g></svg>
<div class="a" style="left:901px;top:671px;width:24px;height:14px;background:#6a6a6a;box-sizing:border-box;border:1px solid #8a8a8a;border-radius:3px"></div>
<svg class="a" style="left:906px;top:676px;" width="14" height="7" viewBox="0 0 14 7"><g fill="#f0f0f0"><rect x="0" y="1" width="13" height="1"/><rect x="0" y="4" width="13" height="1"/></g></svg>
<svg class="a" style="left:930px;top:675px;" width="16" height="8" viewBox="0 0 16 8"><rect x="0.5" y="0.5" width="15" height="10" fill="#fff"/><rect x="2" y="3" width="12" height="1" fill="#999"/></svg>
<svg class="a" style="left:955px;top:676px;" width="14" height="7" viewBox="0 0 14 7"><g fill="#e8e8e8"><rect x="1" y="1" width="1" height="1"/><rect x="3" y="1" width="9" height="1"/><rect x="3" y="3.5" width="1" height="1"/><rect x="5" y="3.5" width="8" height="1"/><rect x="5" y="6" width="1" height="1"/></g></svg>
<svg class="a" style="left:970px;top:667px;" width="22" height="16" viewBox="0 0 22 16"><path d="M1.5,13.5 H3.5 L6.5,15.5 V1.5 H9.8 V6.5 H12.8 V7.5 H15.8 V8.5 H18.8 V16.5 H4 Z" fill="#fff" stroke="#000814" stroke-width="1.3" stroke-linejoin="miter"/><g stroke="#000814" stroke-width="1"><line x1="12.8" y1="7.5" x2="12.8" y2="12"/><line x1="15.8" y1="8.5" x2="15.8" y2="12"/></g></svg>
<div class="a" style="left:998px;top:681px;width:110px;height:1px;background:#1e1e1e"></div>
<div class="a" style="left:1051px;top:675px;width:2px;height:6px;background:#1e1e1e"></div>
<svg class="a" style="left:1055px;top:676px;" width="13" height="8" viewBox="0 0 13 8"><circle cx="6.5" cy="6.5" r="5.5" fill="#fff"/></svg>
<svg class="a" style="left:1112px;top:678px;" width="10" height="7" viewBox="0 0 10 7"><path d="M5,1 V8 M1.5,4.5 H8.5" stroke="#f0f0f0" stroke-width="1.2"/></svg>
<svg class="a" style="left:1185px;top:675px;" width="9" height="7" viewBox="0 0 9 7"><path d="M1,0.8 L3.6,3.3 L1,5.8 M4.6,0.8 L7.2,3.3 L4.6,5.8" fill="none" stroke="#f4f4f4" stroke-width="1.7"/></svg>
<svg class="a" style="left:317px;top:655px;" width="12" height="12" viewBox="0 0 12 12"><polyline points="8,2.5 4,6 8,9.5" fill="none" stroke="#c0c0c0" stroke-width="1.8"/></svg>
<svg class="a" style="left:1168px;top:655px;" width="12" height="12" viewBox="0 0 12 12"><polyline points="4,2.5 8,6 4,9.5" fill="none" stroke="#c0c0c0" stroke-width="1.8"/></svg>
<svg class="a" style="left:1187px;top:178px;" width="10" height="8" viewBox="0 0 10 8"><polyline points="1,6 4.5,2 8,6" fill="none" stroke="#e0e0e0" stroke-width="1.8"/></svg>
<div class="a" style="left:1183px;top:572px;width:11px;height:16px;background:#8a8a8a"></div>
<svg class="a" style="left:1187px;top:592px;" width="10" height="8" viewBox="0 0 10 8"><polyline points="1,2 4.5,6 8,2" fill="none" stroke="#e0e0e0" stroke-width="1.8"/></svg>
<div class="a" style="left:1182px;top:604px;width:1px;height:49px;background:#111"></div>
<div class="a" style="left:1183px;top:619px;width:11px;height:1px;background:#111"></div>
<div class="a" style="left:1183px;top:636px;width:11px;height:1px;background:#111"></div>
<svg class="a" style="left:1186px;top:608px;" width="8" height="8" viewBox="0 0 8 8"><g fill="#f4f4f4"><polygon points="3.8,0 0.8,3.2 6.8,3.2"/><rect x="0.8" y="3.6" width="6" height="1.1"/><polygon points="3.8,4.4 0.3,7.6 7.3,7.6"/></g></svg>
<svg class="a" style="left:1185px;top:623px;" width="9" height="9" viewBox="0 0 9 9"><circle cx="4.3" cy="4.2" r="2.7" fill="#ff10ff"/><circle cx="4.9" cy="4.6" r="2.5" fill="#e80020"/></svg>
<svg class="a" style="left:1186px;top:640px;" width="8" height="8" viewBox="0 0 8 8"><g fill="#f4f4f4"><polygon points="3.8,7.6 0.8,4.4 6.8,4.4"/><rect x="0.8" y="3" width="6" height="1.1"/><polygon points="3.8,3.2 0.3,0 7.3,0"/></g></svg>
<svg class="a" style="left:459px;top:181px;" width="333" height="16" viewBox="0 0 333 16"><rect x="20" y="7" width="1" height="2" fill="#e8e8e8"/><rect x="29" y="7" width="1" height="2" fill="#e8e8e8"/><rect x="38" y="7" width="1" height="2" fill="#e8e8e8"/><rect x="47" y="7" width="1" height="2" fill="#e8e8e8"/><rect x="56" y="7" width="1" height="2" fill="#e8e8e8"/><rect x="65" y="7" width="1" height="2" fill="#e8e8e8"/><rect x="74" y="7" width="1" height="2" fill="#e8e8e8"/><rect x="83" y="5" width="1" height="6" fill="#e8e8e8"/><rect x="92" y="7" width="1" height="2" fill="#e8e8e8"/><rect x="101" y="7" width="1" height="2" fill="#e8e8e8"/><rect x="110" y="7" width="1" height="2" fill="#e8e8e8"/><rect x="119" y="7" width="1" height="2" fill="#e8e8e8"/><rect x="128" y="7" width="1" height="2" fill="#e8e8e8"/><rect x="137" y="7" width="1" height="2" fill="#e8e8e8"/><rect x="146" y="7" width="1" height="2" fill="#e8e8e8"/><rect x="164" y="7" width="1" height="2" fill="#e8e8e8"/><rect x="173" y="7" width="1" height="2" fill="#e8e8e8"/><rect x="182" y="7" width="1" height="2" fill="#e8e8e8"/><rect x="191" y="7" width="1" height="2" fill="#e8e8e8"/><rect x="200" y="7" width="1" height="2" fill="#e8e8e8"/><rect x="209" y="7" width="1" height="2" fill="#e8e8e8"/><rect x="218" y="7" width="1" height="2" fill="#e8e8e8"/><rect x="227" y="5" width="1" height="6" fill="#e8e8e8"/><rect x="236" y="7" width="1" height="2" fill="#e8e8e8"/><rect x="245" y="7" width="1" height="2" fill="#e8e8e8"/><rect x="254" y="7" width="1" height="2" fill="#e8e8e8"/><rect x="263" y="7" width="1" height="2" fill="#e8e8e8"/><rect x="272" y="7" width="1" height="2" fill="#e8e8e8"/><rect x="281" y="7" width="1" height="2" fill="#e8e8e8"/><rect x="290" y="7" width="1" height="2" fill="#e8e8e8"/><rect x="308" y="7" width="1" height="2" fill="#e8e8e8"/><rect x="317" y="7" width="1" height="2" fill="#e8e8e8"/><rect x="326" y="7" width="1" height="2" fill="#e8e8e8"/><rect x="335" y="7" width="1" height="2" fill="#e8e8e8"/><text x="155" y="12" font-family="Liberation Sans" font-size="12" fill="#e8e8e8" text-anchor="middle">1</text><text x="299" y="12" font-family="Liberation Sans" font-size="12" fill="#e8e8e8" text-anchor="middle">2</text></svg>
<svg class="a" style="left:465px;top:180px;" width="11" height="24" viewBox="0 0 11 24"><g fill="#d0d0d0"><polygon points="1.3,0 9.7,0 9.7,4 5.5,8.8 1.3,4"/><polygon points="5.5,8.8 9.7,12.7 9.7,17 1.3,17 1.3,12.7"/><rect x="1.3" y="18" width="8.4" height="5.4"/></g></svg>
<svg class="a" style="left:776px;top:180px;" width="12" height="19" viewBox="0 0 12 19"><rect x="5" y="1" width="1.2" height="8.5" fill="#f0f0f0"/><polygon points="1.3,18 1.3,13.5 5.6,10 9.9,13.5 9.9,18" fill="#cfcfcf"/></svg>
<div class="a" style="left:542px;top:198px;width:1px;height:3px;background:#9a9a9a"></div>
<div class="a" style="left:614px;top:198px;width:1px;height:3px;background:#9a9a9a"></div>
<div class="a" style="left:686px;top:198px;width:1px;height:3px;background:#9a9a9a"></div>
<div class="a" style="left:758px;top:198px;width:1px;height:3px;background:#9a9a9a"></div>
</body></html>
